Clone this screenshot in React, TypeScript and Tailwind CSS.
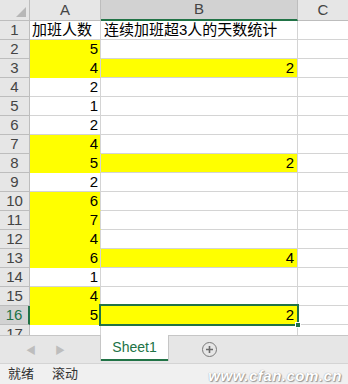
import React from "react";

const aVals = ["加班人数", "5", "4", "2", "1", "2", "4", "5", "2", "6", "7", "4", "6", "1", "4", "5"];
const aYellow = [2, 3, 7, 8, 10, 11, 12, 13, 15, 16];
const bVals: Record<number, string> = { 3: "2", 8: "2", 13: "4", 16: "2" };

const font = { fontFamily: '"Liberation Sans", "Noto Sans CJK SC", sans-serif' };

export default function App() {
  const rows = Array.from({ length: 17 }, (_, i) => i + 1);
  return (
    <div className="w-[348px] h-[384px] bg-white overflow-hidden flex flex-col" style={font}>
      <div className="h-[335px] overflow-hidden relative">
        {/* header */}
        <div className="flex h-[21px]">
          <div className="w-[30px] h-[21px] bg-[#e6e6e6] border-r border-b border-[#bdbdbd] relative">
            <div className="absolute right-[3px] bottom-[3px] w-0 h-0 border-l-[10px] border-l-transparent border-b-[10px] border-b-[#b7b7b7]" />
          </div>
          <div className="w-[71px] h-[21px] bg-[#e6e6e6] border-r border-b border-[#bdbdbd] flex items-center justify-center text-[15px] text-[#444]">A</div>
          <div className="w-[197px] h-[21px] bg-[#d2d2d2] border-r border-[#bdbdbd] border-b-2 border-b-[#217346] flex items-center justify-center text-[15px] text-[#444]">B</div>
          <div className="flex-1 h-[21px] bg-[#e6e6e6] border-b border-[#bdbdbd] flex items-center justify-center text-[15px] text-[#444]">C</div>
        </div>
        {rows.map((r) => {
          const sel = r === 16;
          const aY = aYellow.includes(r);
          const bv = bVals[r];
          return (
            <div key={r} className="flex h-[19px]">
              <div
                className={
                  sel
                    ? "w-[30px] h-[19px] bg-[#d2d2d2] border-r-2 border-r-[#217346] border-b border-b-[#bdbdbd] flex items-center justify-center text-[15px] text-[#217346]"
                    : "w-[30px] h-[19px] bg-[#e6e6e6] border-r border-b border-[#bdbdbd] flex items-center justify-center text-[15px] text-[#444]"
                }
              >
                {r}
              </div>
              <div
                className={
                  (aY ? "bg-[#ffff00] border-b-[#ffff00] " : "bg-white border-b-[#d4d4d4] ") +
                  "w-[71px] h-[19px] border-r border-r-[#d4d4d4] border-b flex items-center px-[2px] text-[15px] text-black " +
                  (r === 1 ? "justify-start" : "justify-end")
                }
              >
                {r <= 16 ? aVals[r - 1] : ""}
              </div>
              <div
                className={
                  (bv ? "bg-[#ffff00] " : "bg-white ") +
                  "w-[197px] h-[19px] border-r border-r-[#d4d4d4] border-b border-b-[#d4d4d4] flex items-center px-[3px] text-[15px] text-black " +
                  (r === 1 ? "justify-start whitespace-nowrap" : "justify-end")
                }
              >
                {r === 1 ? "连续加班超3人的天数统计" : bv ?? ""}
              </div>
              <div className="flex-1 h-[19px] bg-white border-b border-b-[#d4d4d4]" />
            </div>
          );
        })}
        {/* selection box on B16 */}
        <div className="absolute left-[99px] top-[304px] w-[200px] h-[22px] border-2 border-[#217346]" />
        <div className="absolute left-[295px] top-[322px] w-[6px] h-[6px] bg-[#217346] border border-white" />
      </div>
      {/* tab bar */}
      <div className="h-[28px] bg-[#e6e6e6] border-t border-[#c6c6c6] relative flex items-center">
        <span className="absolute left-[26px] top-[7px] text-[10px] text-[#bdbdbd]">◀</span>
        <span className="absolute left-[55px] top-[7px] text-[10px] text-[#bdbdbd]">▶</span>
        <div className="absolute left-[100px] top-[-1px] w-[69px] h-[26px] bg-white border-l border-r border-[#c6c6c6] flex items-center justify-center">
          <span className="text-[14px] text-[#217346] mt-[-2px]">Sheet1</span>
          <div className="absolute left-0 right-0 bottom-0 h-[2px] bg-[#217346]" />
        </div>
        <div className="absolute left-[202px] top-[6px] w-[15px] h-[15px] rounded-full border-[1.5px] border-[#7a7a7a] flex items-center justify-center">
          <svg width="9" height="9" viewBox="0 0 9 9">
            <path d="M4.5 1v7M1 4.5h7" stroke="#6a6a6a" strokeWidth="1.6" />
          </svg>
        </div>
      </div>
      {/* status bar */}
      <div className="flex-1 bg-[#f0f0f0] border-t border-[#d4d4d4] relative flex items-center text-[13px] text-[#333]">
        <span className="ml-[8px]">就绪</span>
        <span className="ml-[18px]">滚动</span>
        <span
          className="absolute right-[6px] top-[1px] text-[15px] font-bold italic text-white tracking-[0.5px]"
          style={{ textShadow: "0 0 1px #888, 1px 1px 1px #999" }}
        >
          www.cfan.com.cn
        </span>
      </div>
    </div>
  );
}
